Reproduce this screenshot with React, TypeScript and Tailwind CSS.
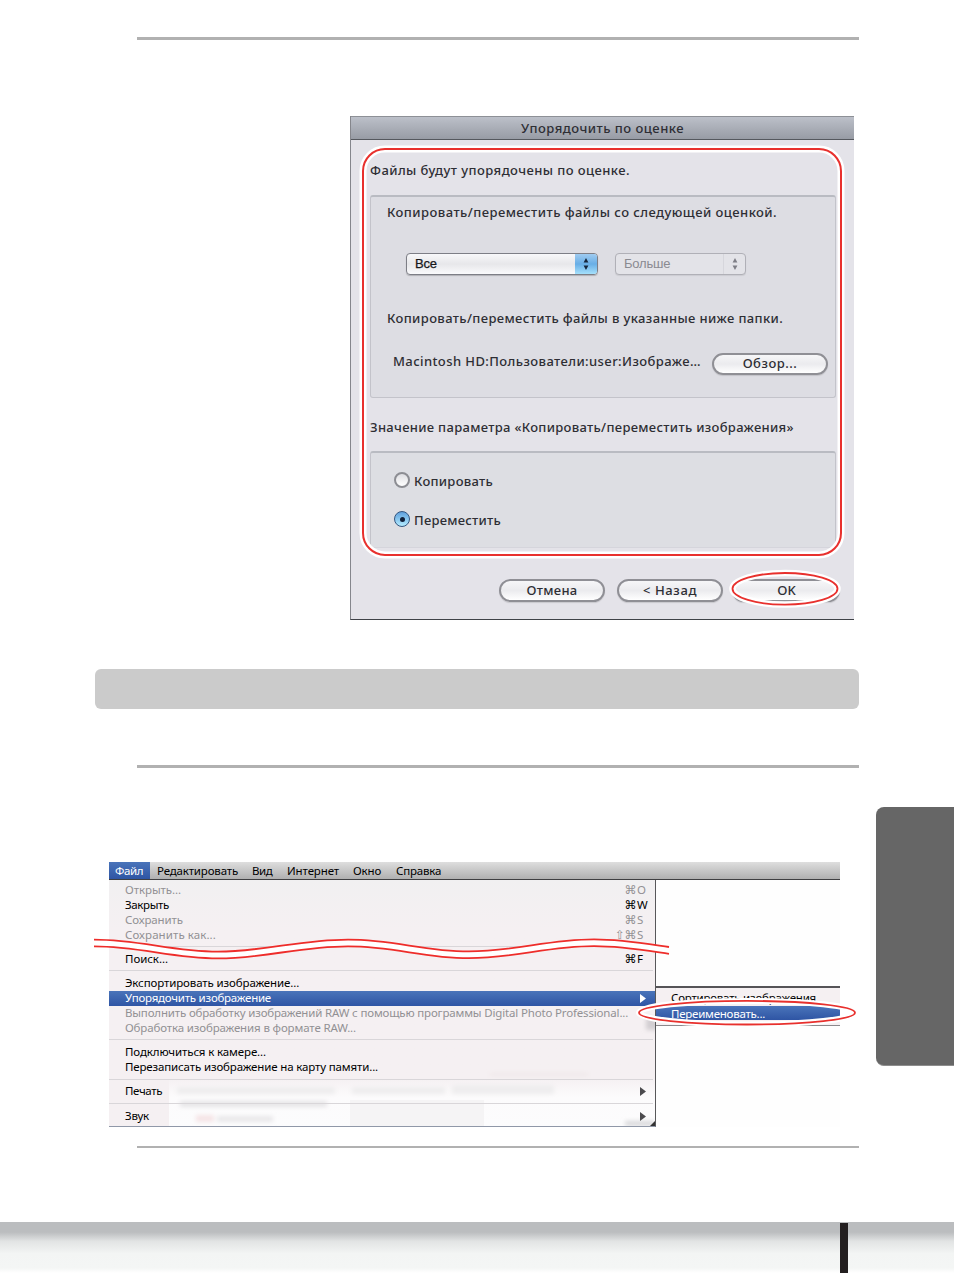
import type { ReactNode } from "react";

function Rule({ className }: { className: string }) {
  return <div className={`ml-[137px] w-[722px] bg-[#b1b1b1] ${className}`} />;
}

function PushButton({ className, children }: { className: string; children: ReactNode }) {
  return (
    <button
      className={`flex shrink-0 items-center justify-center rounded-full border-2 border-[#8f8f95] bg-linear-to-b from-[#f6f6f8] via-[#ebebee] to-white whitespace-nowrap shadow-[0_1px_1px_rgba(0,0,0,0.12)] ${className}`}
    >
      {children}
    </button>
  );
}

function UpDown({ color }: { color: string }) {
  return (
    <svg width="6" height="14" viewBox="0 0 6 14" fill={color}>
      <path d="M3 1 5.4 5.4H0.6zM3 13 0.6 8.6h4.8z" />
    </svg>
  );
}

function Dialog() {
  return (
    <div className="relative mt-[76px] ml-[350px] flex h-[504px] w-[504px] flex-col border-b border-l border-b-[#3f4247] border-l-[#85868c] bg-[#e4e3e9] font-['Noto_Sans',sans-serif] text-[13px] font-medium text-[#2e2e34]">
      <div className="flex h-6 shrink-0 items-center justify-center border-t border-b border-t-[#8d9096] border-b-[#55585e] bg-linear-to-b from-[#bcc0c9] to-[#989ca5] pt-px tracking-[0.48px]">
        <span>Упорядочить по оценке</span>
      </div>
      <div className="mt-[21px] ml-[19px] h-5 leading-[19px] tracking-[0.43px] whitespace-nowrap">
        Файлы будут упорядочены по оценке.
      </div>

      <div className="mt-[14px] ml-[19px] flex h-[203px] w-[466px] shrink-0 flex-col rounded-[3px] border border-t-2 border-[#c3c3ca] border-t-[#b9bbc2] bg-[#dddde3] pt-[6px]">
        <div className="ml-4 h-5 leading-[18px] tracking-[0.45px] whitespace-nowrap">
          Копировать/переместить файлы со следующей оценкой.
        </div>
        <div className="mt-[30px] ml-[35px] flex h-[22px] gap-[17px] font-['Liberation_Sans',sans-serif] font-normal">
          <div className="flex w-[192px] items-stretch justify-between overflow-hidden rounded-[4px] border border-[#7d7e86] bg-linear-to-b from-[#f8f8fa] via-[#e7e7ea] to-[#fafafc] shadow-[0_1px_1px_rgba(0,0,0,0.2)]">
            <span className="pl-2 text-[13px] leading-5 tracking-[-0.2px] text-[#17171b] [-webkit-text-stroke:0.25px_#17171b]">Все</span>
            <span className="flex w-[22px] items-center justify-center bg-linear-to-b from-[#9fcbf0] via-[#68aee6] to-[#a5e0fb]">
              <UpDown color="#16263c" />
            </span>
          </div>
          <div className="flex w-[131px] items-stretch justify-between rounded-[4px] border border-[#b0b0b7] bg-[#e3e3e8] shadow-[0_1px_1px_rgba(0,0,0,0.08)]">
            <span className="pl-2 text-[13px] leading-5 tracking-[-0.2px] text-[#8a8a91]">Больше</span>
            <span className="flex w-[22px] items-center justify-center border-l border-[#d6d6dc]">
              <UpDown color="#7e7e86" />
            </span>
          </div>
        </div>
        <div className="mt-[34px] ml-4 h-5 leading-[18px] tracking-[0.37px] whitespace-nowrap">
          Копировать/переместить файлы в указанные ниже папки.
        </div>
        <div className="mt-6 ml-[22px] flex h-[22px]">
          <span className="w-[319px] leading-[16px] tracking-[0.41px] whitespace-nowrap">
            Macintosh HD:Пользователи:user:Изображе…
          </span>
          <PushButton className="h-[22px] w-[116px] tracking-[0.5px]">Обзор...</PushButton>
        </div>
      </div>

      <div className="mt-5 ml-[19px] h-5 leading-[18px] tracking-[0.31px] whitespace-nowrap">
        Значение параметра «Копировать/переместить изображения»
      </div>
      <div className="mt-[13px] ml-[19px] flex h-[97px] w-[466px] shrink-0 flex-col gap-[21px] rounded-[3px] border border-t-2 border-[#c3c3ca] border-t-[#b9bbc2] border-b-[#d5d5dc] bg-[#dddee3] pt-[18px] pl-[23px]">
        <label className="flex h-[18px] items-center gap-1 tracking-[0.27px]">
          <span className="size-4 rounded-full border-2 border-[#8c8d93] bg-linear-to-b from-[#dedee2] to-white" />
          <span className="pt-[3px]">Копировать</span>
        </label>
        <label className="flex h-[18px] items-center gap-1 tracking-[0.25px]">
          <span className="flex size-4 items-center justify-center rounded-full border-[1.5px] border-[#33557f] bg-linear-to-b from-[#5fa0dc] to-[#b3ecff]">
            <span className="size-[5px] rounded-full bg-[#10203a]" />
          </span>
          <span className="pt-[3px]">Переместить</span>
        </label>
      </div>

      <div className="mt-[31px] ml-[148px] flex h-[23px] gap-3">
        <PushButton className="h-[23px] w-[106px] tracking-[0.3px]">Отмена</PushButton>
        <PushButton className="h-[23px] w-[106px] tracking-[0.6px]">&lt; Назад</PushButton>
        <PushButton className="ml-[-3px] h-[23px] w-[108px] pl-px">OK</PushButton>
      </div>

      <svg className="absolute top-0 -left-px" width="504" height="504" viewBox="350 116 504 504" fill="none">
        <rect x="363" y="149" width="478" height="406" rx="22" stroke="#fff" strokeWidth="7" />
        <rect x="363" y="149" width="478" height="406" rx="22" stroke="#e8302d" strokeWidth="2" />
        <ellipse cx="785" cy="588.8" rx="52.5" ry="15.8" stroke="#fff" strokeWidth="6.5" />
        <ellipse cx="785" cy="588.8" rx="52.5" ry="15.8" stroke="#e8302d" strokeWidth="1.8" />
      </svg>
    </div>
  );
}

function Item({
  children,
  className = "",
  shortcut,
  disabled,
  arrow,
  active,
}: {
  children: ReactNode;
  className?: string;
  shortcut?: [string, string];
  disabled?: boolean;
  arrow?: boolean;
  active?: boolean;
}) {
  const tone = active
    ? "bg-linear-to-b from-[#4a74ba] to-[#2f55a4] text-white"
    : disabled
      ? "text-[#929094]"
      : "text-black";
  return (
    <div className={`flex h-[15px] shrink-0 items-start pl-4 leading-[14px] whitespace-nowrap ${tone}`}>
      <span className={`grow ${className}`}>{children}</span>
      {shortcut && (
        <span className="flex w-[39px] shrink-0">
          <span className="-ml-[10px] w-[31px] pr-px text-right font-['DejaVu_Sans',sans-serif] text-[12px] tracking-[-0.5px]">{shortcut[0]}</span>
          <span>{shortcut[1]}</span>
        </span>
      )}
      {arrow && (
        <svg className="mt-[3px] mr-[9px]" width="6" height="9" viewBox="0 0 6 9" fill={active ? "#fff" : "#4c4b4e"}>
          <path d="M0 0 6 4.5 0 9z" />
        </svg>
      )}
    </div>
  );
}

function Separator({ className }: { className: string }) {
  return <div className={`h-px w-[544px] shrink-0 bg-[#d9d6d9] ${className}`} />;
}

const WAVE_TOP =
  "M94 939.6C140 939.6 172 951.6 218 951.6S300 939.6 348 939.6S422 951.4 469 951.4S547 939.4 594 939.4C622 939.4 645 943.5 669 947";

function MenuShot() {
  return (
    <div className="relative mt-[94px] ml-[109px] flex h-[265px] w-[731px] flex-col bg-[#fefefe] font-['Noto_Sans',sans-serif] text-[11.5px] text-black">
      <div className="flex h-[18px] shrink-0 items-stretch border-b border-[#3f3f41] bg-linear-to-b from-[#dedede] to-[#b0b0b0] leading-[17px] whitespace-nowrap">
        <span className="w-[41px] bg-linear-to-b from-[#4a74ba] to-[#2f55a4] pl-[6px] tracking-[-0.4px] text-white">Файл</span>
        <span className="ml-[7px] w-[95px] tracking-[-0.17px]">Редактировать</span>
        <span className="w-[35px] tracking-[-0.45px]">Вид</span>
        <span className="w-[66px] tracking-[-0.12px]">Интернет</span>
        <span className="w-[43px] tracking-[-0.18px]">Окно</span>
        <span className="tracking-[-0.2px]">Справка</span>
      </div>

      <div className="relative flex h-[247px] w-[547px] shrink-0 flex-col border-r border-b border-r-[#58585a] border-b-[#9098a8] bg-linear-to-b from-[#f1f0f1] via-[#f5f0f2] via-20% to-[#f5f0f2] pt-[3px]">
        <svg className="absolute top-0 left-0" width="546" height="246" viewBox="109 880 546 246">
          <defs>
            <filter id="haze" x="-20%" y="-60%" width="140%" height="220%">
              <feGaussianBlur stdDeviation="2.2" />
            </filter>
            <linearGradient id="pale" x1="0" y1="0" x2="0" y2="1">
              <stop offset="0" stopColor="#fcfbfc" stopOpacity="0" />
              <stop offset="0.4" stopColor="#fcfbfc" />
              <stop offset="1" stopColor="#fcfcfd" />
            </linearGradient>
          </defs>
          <path d="M169 1078h486v48H169z" fill="url(#pale)" />
          <path d="M350 1100h134v26H350z" fill="#f5f4f5" />
          <g filter="url(#haze)">
            <path d="M177 1087h158v7H177zM352 1087h93v7h-93zM452 1085h102v9H452z" fill="#eeedee" />
            <path d="M180 1101h147v6H180z" fill="#e6e5e7" />
            <path d="M196 1115h18v7h-18z" fill="#f5e4e6" />
            <path d="M217 1116h56v6h-56z" fill="#e9e8ea" />
            <path d="M490 1073h98v3h-98z" fill="#efe8e9" />
            <path d="M646 1018h14v12h-14z" fill="#d2ced1" />
            <path d="M625 1121h30v5h-30z" fill="#d8d8da" />
          </g>
          <path d="M655 1121v5h-5z" fill="#333" />
        </svg>
        <div className="relative flex flex-col">
          <Item disabled shortcut={["⌘", "O"]} className="tracking-[-0.08px]">Открыть...</Item>
          <Item shortcut={["⌘", "W"]} className="tracking-[-0.35px]">Закрыть</Item>
          <Item disabled shortcut={["⌘", "S"]} className="tracking-[-0.12px]">Сохранить</Item>
          <Item disabled shortcut={["⇧⌘", "S"]} className="tracking-[0.08px]">Сохранить как...</Item>
          <Separator className="mt-[3px] mb-[5px]" />
          <Item shortcut={["⌘", "F"]} className="tracking-[-0.05px]">Поиск...</Item>
          <Separator className="mt-[3px] mb-[5px]" />
          <Item className="tracking-[-0.12px]">Экспортировать изображение...</Item>
          <Item active arrow className="tracking-[-0.24px]">Упорядочить изображение</Item>
          <Item disabled className="tracking-[-0.165px]">
            Выполнить обработку изображений RAW с помощью программы Digital Photo Professional...
          </Item>
          <Item disabled className="tracking-[-0.14px]">Обработка изображения в формате RAW...</Item>
          <Separator className="mt-[3px] mb-[5px]" />
          <Item className="tracking-[-0.12px]">Подключиться к камере...</Item>
          <Item className="tracking-[-0.14px]">Перезаписать изображение на карту памяти...</Item>
          <Separator className="mt-1 mb-1" />
          <Item arrow className="tracking-[-0.38px]">Печать</Item>
          <Separator className="mt-1 mb-[5px]" />
          <Item arrow className="tracking-[-0.25px]">Звук</Item>
        </div>
      </div>

      <div className="absolute top-[124px] left-[547px] h-[40px] w-[184px] border-t-2 border-b border-t-[#555457] border-b-[#8b898c] bg-[#f5f0f2] pt-[3px] whitespace-nowrap">
        <div className="h-[15px] pl-[15px] leading-[13px] tracking-[-0.22px]">Сортировать изображения</div>
        <div className="h-[14px] bg-linear-to-b from-[#4a74ba] to-[#2f55a4] pl-[15px] leading-[15px] tracking-[-0.24px] text-white">
          Переименовать...
        </div>
      </div>

      <svg className="absolute top-0 left-[-16px]" width="770" height="265" viewBox="93 862 770 265" fill="none">
        <path d={WAVE_TOP} stroke="#fff" strokeWidth="6" transform="translate(0 3.4)" />
        <path d={WAVE_TOP} stroke="#ee2d2a" strokeWidth="1.8" />
        <path d={WAVE_TOP} stroke="#ee2d2a" strokeWidth="1.8" transform="translate(0 6.8)" />
        <ellipse cx="747" cy="1012.7" rx="108" ry="11.8" stroke="#fff" strokeWidth="6" />
        <ellipse cx="747" cy="1012.7" rx="108" ry="11.8" stroke="#e8302d" strokeWidth="1.8" />
      </svg>
    </div>
  );
}

export default function App() {
  return (
    <div className="flex h-[1273px] w-[954px] flex-col overflow-hidden bg-white">
      <Rule className="mt-[37px] h-[3px] shrink-0" />
      <Dialog />
      <div className="mt-[49px] ml-[95px] h-[40px] w-[764px] shrink-0 rounded-[6px] bg-[#cbcbcb]" />
      <div className="flex grow">
        <div className="flex w-[876px] shrink-0 flex-col">
          <Rule className="mt-[56px] h-[3px]" />
          <MenuShot />
          <Rule className="mt-[19px] h-[2px]" />
        </div>
        <div className="mt-[98px] h-[259px] w-[78px] rounded-l-[8px] border-b border-[#8d8d8d] bg-[#666]" />
      </div>
      <div className="h-[51px] shrink-0 bg-[linear-gradient(#bbbdbf_0%,#bbbdbf_20%,#e2e4e4_38%,#f3f5f4_62%,#f4f6f5_90%,#ffffff_100%)] pt-px">
        <div className="ml-[840px] h-[50px] w-2 bg-[#231f20]" />
      </div>
    </div>
  );
}
